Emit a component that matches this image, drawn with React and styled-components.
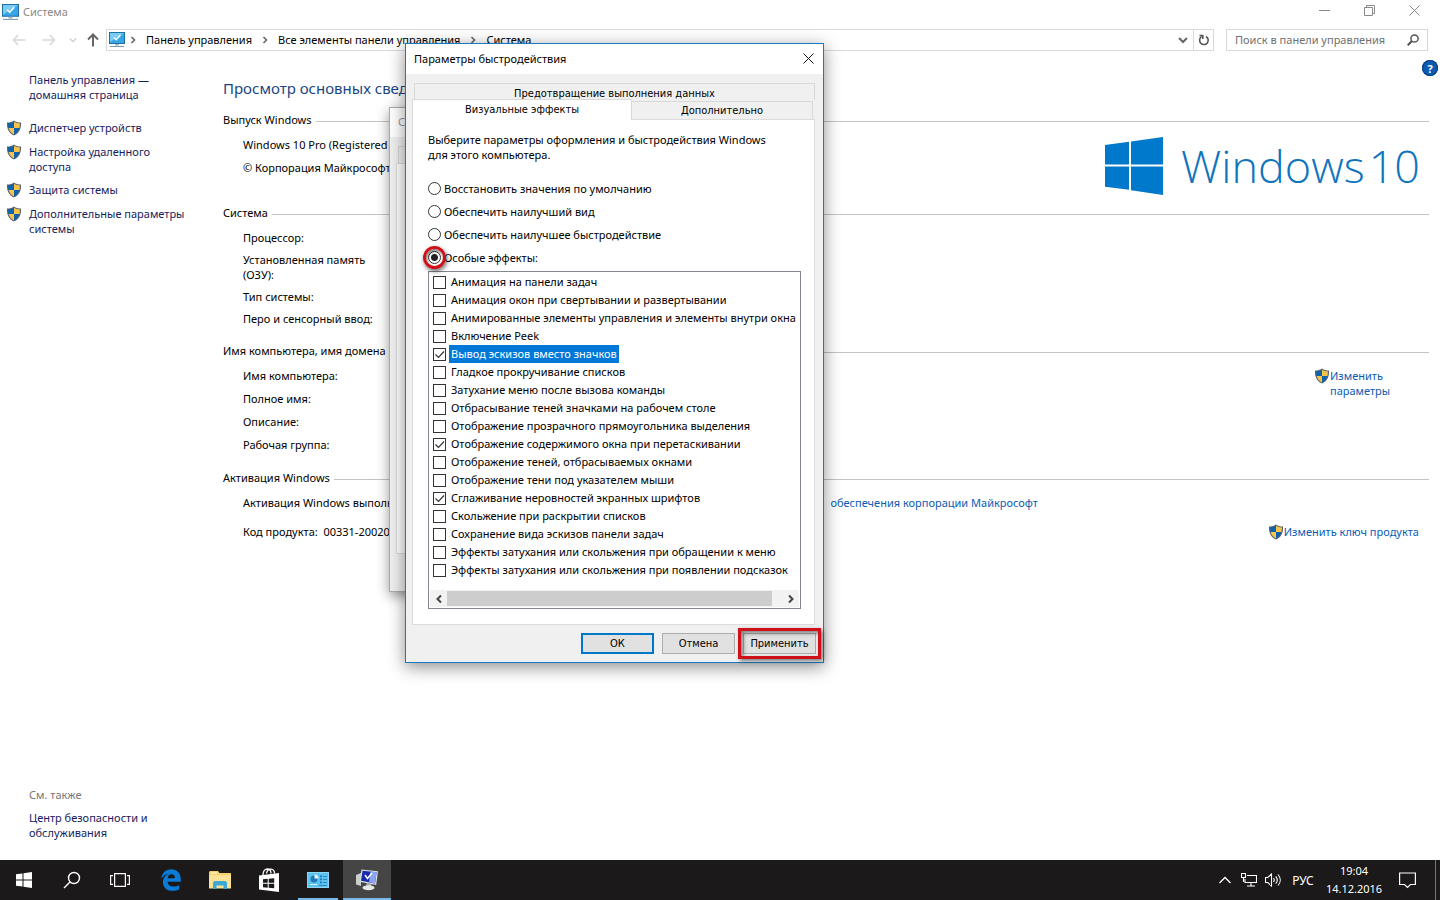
import React, { useState } from 'react';
import styled, { createGlobalStyle } from 'styled-components';

const sideLinks = [
    'Диспетчер устройств',
    'Настройка удаленного доступа',
    'Защита системы',
    'Дополнительные параметры системы',
];

const modes = [
    'Восстановить значения по умолчанию',
    'Обеспечить наилучший вид',
    'Обеспечить наилучшее быстродействие',
    'Особые эффекты:',
];

const effects = [
    'Анимация на панели задач',
    'Анимация окон при свертывании и развертывании',
    'Анимированные элементы управления и элементы внутри окна',
    'Включение Peek',
    'Вывод эскизов вместо значков',
    'Гладкое прокручивание списков',
    'Затухание меню после вызова команды',
    'Отбрасывание теней значками на рабочем столе',
    'Отображение прозрачного прямоугольника выделения',
    'Отображение содержимого окна при перетаскивании',
    'Отображение теней, отбрасываемых окнами',
    'Отображение тени под указателем мыши',
    'Сглаживание неровностей экранных шрифтов',
    'Скольжение при раскрытии списков',
    'Сохранение вида эскизов панели задач',
    'Эффекты затухания или скольжения при обращении к меню',
    'Эффекты затухания или скольжения при появлении подсказок',
];

const MonitorIcon = ({ size }) => (
    <svg width={size} height={size} viewBox='0 0 16 16'>
        <rect x='0.5' y='0.5' width='15' height='11' fill='#35a7e8' stroke='#1f6f9f' />
        <path d='M1 1h14L1 10z' fill='#7accf5' />
        <path d='M5 5.5l2.2 2.3L11.5 3' fill='none' stroke='#fff' strokeWidth='1.4' />
        <path d='M6 12h4v1.5H6z' fill='#9bb4c4' />
        <path d='M1 14.5h14' stroke='#7d98a8' />
    </svg>
);

const ShieldIcon = () => (
    <svg width='16' height='16' viewBox='0 0 16 16'>
        <path d='M8 .5C6 2 3.5 2.6 1 2.5c-.3 6 1.400 10.500 7 13 5.600-2.500 7.300-7 7-13C12.500 2.600 10 2 8 .5z' fill='#59606a' />
        <path d='M8 1.800C6.200 3 4.200 3.500 2.100 3.500c0 1.700.1 3.100.5 4.500H8z' fill='#0f62ac' />
        <path d='M8 1.800c1.800 1.200 3.800 1.700 5.900 1.700 0 1.700-.1 3.100-.5 4.500H8z' fill='#f6c34c' />
        <path d='M2.600 8c.8 2.800 2.400 5 5.400 6.400V8z' fill='#f6c34c' />
        <path d='M13.400 8c-.8 2.800-2.400 5-5.400 6.400V8z' fill='#0f62ac' />
    </svg>
);

const Arrow = ({ dir, color }) => (
    <svg width='14' height='14' viewBox='0 0 14 14' fill='none' stroke={color} strokeWidth='1.6'>
        {dir === 'left' && <path d='M13.500 7H1.500M6 2L1.500 7 6 12' />}
        {dir === 'right' && <path d='M.5 7h12M8 2l4.500 5L8 12' />}
        {dir === 'up' && <path d='M7 13.500V1.500M2 6.500l5-5 5 5' strokeWidth='2' />}
    </svg>
);

const Chevron = ({ dir, color = '#666', width = 1.6, size = 10 }) => (
    <svg width={size} height={size} viewBox='0 0 10 10' fill='none' stroke={color} strokeWidth={width}>
        {dir === 'left' && <path d='M7 1.500L3.500 5 7 8.500' />}
        {dir === 'right' && <path d='M3.500 2L6.500 5 3.500 8' />}
        {dir === 'next' && <path d='M3 1.500L6.500 5 3 8.500' />}
        {dir === 'down' && <path d='M1 3l4 4 4-4' />}
    </svg>
);

const CloseIcon = ({ color }) => (
    <svg width='11' height='11' viewBox='0 0 11 11' stroke={color}>
        <path d='M.5.5l10 10M10.500.5l-10 10' />
    </svg>
);

const Option = ({ index, label, checked, onChange }) => (
    <OptionLabel htmlFor={`mode${index}`} >
        <Radio id={`mode${index}`} type='radio' name='mode' checked={checked} onChange={onChange} />
        {label}
        {index === 3 && <RedRing />}
    </OptionLabel>
);

const Effect = ({ index, label, checked, selected, onChange }) => (
    <EffectRow htmlFor={`effect${index}`} >
        <CheckCell>
            <Check id={`effect${index}`} type='checkbox' checked={checked} onChange={onChange} />
            {checked && (
                <Tick viewBox='0 0 13 13'>
                    <path d='M2.500 6.500l3 3 5.500-6' />
                </Tick>
            )}
        </CheckCell>
        <EffectText $selected={selected} > {label} </EffectText>
    </EffectRow>
);

const PerformanceDialog = () => {
    const [mode, setMode] = useState(3);
    const [checked, setChecked] = useState([4, 9, 12]);
    const [selected, setSelected] = useState(4);

    const toggle = (index) => {
        setSelected(index);
        setChecked(checked.includes(index) ? checked.filter(i => i !== index) : [...checked, index]);
    };

    return (
        <Dialog>
            <DialogTitle>
                Параметры быстродействия
                <IconButton aria-label='Закрыть' ><CloseIcon color='#111' /></IconButton>
            </DialogTitle>
            <DialogBody>
                <BackTab> Предотвращение выполнения данных </BackTab>
                <Tabs>
                    <ActiveTab> Визуальные эффекты </ActiveTab>
                    <Tab> Дополнительно </Tab>
                </Tabs>
                <Panel>
                    <Intro> Выберите параметры оформления и быстродействия Windows для этого компьютера. </Intro>
                    <Options>
                        {modes.map((label, i) => (
                            <Option key={label} index={i} label={label} checked={mode === i} onChange={() => setMode(i)} />
                        ))}
                    </Options>
                    <ListBox>
                        <List>
                            {effects.map((label, i) => (
                                <Effect
                                    key={label}
                                    index={i}
                                    label={label}
                                    checked={checked.includes(i)}
                                    selected={selected === i}
                                    onChange={() => toggle(i)}
                                />
                            ))}
                        </List>
                        <ScrollBar>
                            <IconButton aria-label='Влево' ><Chevron dir='left' color='#444' width={2} /></IconButton>
                            <ScrollTrack><ScrollThumb /></ScrollTrack>
                            <IconButton aria-label='Вправо' ><Chevron dir='next' color='#444' width={2} /></IconButton>
                        </ScrollBar>
                    </ListBox>
                </Panel>
                <Buttons>
                    <PrimaryButton> ОК </PrimaryButton>
                    <PushButton> Отмена </PushButton>
                    <ApplyWrap>
                        <PushButton> Применить </PushButton>
                        <RedFrame />
                    </ApplyWrap>
                </Buttons>
            </DialogBody>
        </Dialog>
    );
};

const Taskbar = () => (
    <Bar>
        <TaskGroup>
            <TaskButton aria-label='Пуск' >
                <svg width='16' height='16' viewBox='0 0 16 16' fill='#fff'>
                    <path d='M0 2.300L6.500 1.400v6.100H0zM7.500 1.200L16 0v7.500H7.500zM0 8.500h6.500v6.100L0 13.700zM7.500 8.500H16V16l-8.500-1.200z' />
                </svg>
            </TaskButton>
            <TaskButton aria-label='Поиск' >
                <svg width='18' height='18' viewBox='0 0 18 18' fill='none' stroke='#fff' strokeWidth='1.4'>
                    <circle cx='11' cy='7' r='5.500' /><path d='M7 11L1 17' />
                </svg>
            </TaskButton>
            <TaskButton aria-label='Представление задач' >
                <svg width='20' height='14' viewBox='0 0 20 14' fill='none' stroke='#fff' strokeWidth='1.200'>
                    <path d='M4.600.6h10.800v12.800H4.600zM3 2.600H.6v8.800H3M17 2.600h2.400v8.800H17' />
                </svg>
            </TaskButton>
        </TaskGroup>
        <AppGroup>
            <TaskButton aria-label='Edge' >
                <svg width='20' height='22' viewBox='0 0 20 22'>
                    <path d='M.2 9.700C1 4 4.700.3 10.300.3c6 0 9.700 4.500 9.500 10.700v1.800H6.600c.2 3.200 2.600 4.800 5.800 4.800 2.200 0 4.100-.7 5.900-1.700v4.300c-2 1.100-4.300 1.600-6.900 1.600C5.500 21.800 1.900 18.300 1.900 13c0-3.600 1.900-6.700 5.300-8.300C4.200 5.200 1.800 7 .2 9.700zm6.500-.5h7.200c.1-2.500-1.100-4-3.500-4-2.100 0-3.400 1.500-3.700 4z' fill='#0a7bd6' fillRule='evenodd' />
                </svg>
            </TaskButton>
            <TaskButton aria-label='Проводник' >
                <svg width='22' height='18' viewBox='0 0 22 18'>
                    <path d='M1 0h8l1.500 2H22v15H0V1z' fill='#f5cf6b' />
                    <path d='M2 1.500h6V3H2z' fill='#fff2bf' />
                    <path d='M0 4h22v13.500H0z' fill='#fbe296' />
                    <path d='M4 11.500L5.500 10h11l1.500 1.500V18h-3.500v-3.500h-7V18H4z' fill='#3fa9d6' />
                </svg>
            </TaskButton>
            <TaskButton aria-label='Магазин' >
                <svg width='22' height='24' viewBox='0 0 22 24'>
                    <path d='M1 7.500L21 5v19L1 21.500z' fill='#fff' />
                    <path d='M5 7C5 3 7 1 9.500 1S13 3 13 5.500M8.500 5.500C9 2.500 11 1 13 1.200c2.300.2 3.500 2 3.500 4.300' fill='none' stroke='#fff' strokeWidth='1.300' />
                    <path d='M5 11.200l4.700-.4v4H5zM10.700 10.700l5.500-.5v4.600h-5.500zM5 15.700h4.700v4L5 19.300zM10.700 15.700h5.500v4.600l-5.500-.5z' fill='#1b1919' />
                </svg>
            </TaskButton>
            <TaskButton aria-label='Панель управления' $line='40px' >
                <svg width='22' height='16' viewBox='0 0 22 16'>
                    <rect x='.5' y='.5' width='21' height='15' fill='#5cc3f0' stroke='#8fd6f6' />
                    <circle cx='7' cy='7' r='3.500' fill='#2277bb' />
                    <path d='M7.500 6.500V2.500a4 4 0 0 1 4 4z' fill='#e8f7fd' />
                    <path d='M13 3.500h1.800v1.800H13zM13 6.500h1.800v1.800H13zM13 9.500h1.800v1.800H13z' fill='#1673b5' />
                    <path d='M16 4.500h4M16 7.500h4M16 10.500h4M12 13.500h8' stroke='#2a86c4' />
                    <path d='M3 12.500h7' stroke='#d8f2fd' />
                </svg>
            </TaskButton>
            <TaskButton aria-label='Свойства системы' $line='48px' $active >
                <svg width='24' height='22' viewBox='0 0 24 22'>
                    <path d='M1 6l5-2v13l-5-1.500z' fill='#c9cec9' />
                    <path d='M6.500.5L23 2.200 21.200 16 4.500 12.800z' fill='#d9dee2' />
                    <path d='M7.600 1.800l14 1.500-1.600 11.200L6 11.800z' fill='#1a2aa8' />
                    <path d='M15.500 2.600l6.100.7L20 14.500l-6-1.200z' fill='#8ca4f2' />
                    <path d='M10 6l2.500 3.500L17 4' fill='none' stroke='#fff' strokeWidth='1.500' />
                    <path d='M11.500 14l5 1-.4 2.400h-4.800z' fill='#aab1b6' />
                    <ellipse cx='13.500' cy='18.800' rx='6' ry='2.500' fill='#e6e8e6' />
                </svg>
            </TaskButton>
        </AppGroup>
        <Tray>
            <TrayButton aria-label='Скрытые значки' >
                <svg width='12' height='8' viewBox='0 0 12 8' fill='none' stroke='#fff' strokeWidth='1.300'><path d='M.5 7L6 1.500 11.500 7' /></svg>
            </TrayButton>
            <TrayButton aria-label='Сеть' >
                <svg width='16' height='14' viewBox='0 0 16 14' fill='none' stroke='#fff' strokeWidth='1.100'>
                    <path d='M6 2.500h9.500v7H4V6M10 9.500v3M6 13h8M.5.5h4v4h-4zM2.500 4.500V9' />
                </svg>
            </TrayButton>
            <TrayButton aria-label='Громкость' >
                <svg width='17' height='14' viewBox='0 0 17 14' fill='none' stroke='#fff' strokeWidth='1.100'>
                    <path d='M.5 4.500h2.300L6.500 1v12L2.800 9.500H.5zM8.500 5c1 1.300 1 2.700 0 4M10.700 3.300c2 2.300 2 5.100 0 7.400M13 1.500c3 3.300 3 7.700 0 11' />
                </svg>
            </TrayButton>
            <Lang> РУС </Lang>
            <Clock>
                <time>19:04</time>
                <time>14.12.2016</time>
            </Clock>
            <Notify aria-label='Центр уведомлений' >
                <svg width='17' height='17' viewBox='0 0 17 17' fill='none' stroke='#fff' strokeWidth='1.200'>
                    <path d='M.6 1h15.800v11.500h-5L8.500 15.500l-3-3H.6z' />
                </svg>
            </Notify>
            <ShowDesktop aria-label='Свернуть все окна' />
        </Tray>
    </Bar>
);

const App = () => (
    <Screen>
        <GlobalStyle />
        <TitleBar>
            <MonitorIcon size={17} />
            <Title> Система </Title>
            <WindowButton aria-label='Свернуть' >
                <svg width='11' height='11' stroke='#888'><path d='M0 5.500h11' /></svg>
            </WindowButton>
            <WindowButton aria-label='Развернуть' >
                <svg width='11' height='11' fill='none' stroke='#888'><path d='M.5 2.500h8v8h-8zM2.500 2.500v-2h8v8h-2' /></svg>
            </WindowButton>
            <WindowButton aria-label='Закрыть' ><CloseIcon color='#888' /></WindowButton>
        </TitleBar>
        <NavBar>
            <NavButtons>
                <IconButton aria-label='Назад' ><Arrow dir='left' color='#d8d8d8' /></IconButton>
                <IconButton aria-label='Вперед' ><Arrow dir='right' color='#d8d8d8' /></IconButton>
                <NarrowButton aria-label='Журнал' ><Chevron dir='down' color='#ccc' size={8} /></NarrowButton>
                <NarrowButton aria-label='Вверх' ><Arrow dir='up' color='#666' /></NarrowButton>
            </NavButtons>
            <Address>
                <MonitorIcon size={16} />
                <Chevron dir='right' />
                <Crumb href='#panel' > Панель управления </Crumb>
                <Chevron dir='right' />
                <Crumb href='#all' > Все элементы панели управления </Crumb>
                <Chevron dir='right' />
                <Crumb href='#system' > Система </Crumb>
                <DropButton aria-label='Предыдущие расположения' ><Chevron dir='down' width={2} /></DropButton>
                <RefreshButton aria-label='Обновить' >
                    <svg width='12' height='12' viewBox='0 0 12 12' fill='none' stroke='#555' strokeWidth='1.600'>
                        <path d='M8 2.500a4.300 4.300 0 1 1-4.500.2M1.500 1.500h3.300V5' />
                    </svg>
                </RefreshButton>
            </Address>
            <Search>
                <SearchInput type='search' aria-label='Поиск' placeholder='Поиск в панели управления' />
                <svg width='12' height='12' viewBox='0 0 12 12' fill='none' stroke='#555' strokeWidth='1.500'>
                    <circle cx='7.500' cy='4.500' r='3.600' /><path d='M5 7L.7 11.300' strokeWidth='2' />
                </svg>
            </Search>
        </NavBar>
        <Content>
            <Sidebar>
                <SideLink href='#home' $first > Панель управления — домашняя страница </SideLink>
                {sideLinks.map(label => (
                    <SideLink key={label} href='#side' ><ShieldIcon /><span>{label}</span></SideLink>
                ))}
                <SeeAlso> См. также </SeeAlso>
                <SideLink href='#security' > Центр безопасности и обслуживания </SideLink>
            </Sidebar>
            <Main>
                <Heading> Просмотр основных сведений </Heading>
                <Section $height={93} >
                    <Legend> Выпуск Windows </Legend>
                    <Rows>
                        <p>Windows 10 Pro (Registered</p>
                        <p>© Корпорация Майкрософт</p>
                    </Rows>
                    <Brand>
                        <svg width='58' height='58' viewBox='0 0 58 58' fill='#0078cc'>
                            <path d='M0 8l24-3.300V27.500H0zM26 4.400L58 0v27.500H26zM0 29.500h24v23.200L0 49.700zM26 29.500h32V58l-32-4.700z' />
                        </svg>
                        <BrandText><span>Windows</span><span>10</span></BrandText>
                    </Brand>
                </Section>
                <Section $height={138} >
                    <Legend> Система </Legend>
                    <Rows $tight >
                        <p>Процессор:</p>
                        <p>Установленная память (ОЗУ):</p>
                        <p>Тип системы:</p>
                        <p>Перо и сенсорный ввод:</p>
                    </Rows>
                </Section>
                <Section $height={127} >
                    <Legend> Имя компьютера, имя домена </Legend>
                    <Rows>
                        <p>Имя компьютера:</p>
                        <p>Полное имя:</p>
                        <p>Описание:</p>
                        <p>Рабочая группа:</p>
                    </Rows>
                    <ChangeLink href='#change' ><ShieldIcon /><span>Изменить параметры</span></ChangeLink>
                </Section>
                <Section $height={80} >
                    <Legend> Активация Windows </Legend>
                    <Activation>
                        <p>Активация Windows выполнена</p>
                        <BlueLink href='#license' > обеспечения корпорации Майкрософт </BlueLink>
                    </Activation>
                    <Product>
                        <p>Код продукта:&nbsp; 00331-20020</p>
                        <BlueLink href='#key' ><ShieldIcon /> Изменить ключ продукта </BlueLink>
                    </Product>
                </Section>
            </Main>
            <HelpButton aria-label='Справка' >?</HelpButton>
        </Content>
        <Taskbar />
        <BackDialog>
            <BackTitle> С </BackTitle>
            <BackBody>
                <BackDialogTab />
                <BackPanel />
            </BackBody>
        </BackDialog>
        <PerformanceDialog />
    </Screen>
);

const GlobalStyle = createGlobalStyle`
    * { box-sizing: border-box; }
    body { margin: 0; overflow: hidden; }
    body, button, input {
        font-family: 'Noto Sans', 'Open Sans', sans-serif;
        font-size: 11px;
        line-height: 15px;
    }
    p { margin: 0; }
    a { text-decoration: none; }
    button { border: 0; padding: 0; background: none; color: inherit; }
    svg { flex: none; display: block; }
`;

const Screen = styled.div`
    position: relative;
    display: flex;
    flex-direction: column;
    min-height: 100vh;
    background: #fff;
    color: #000;
    overflow: hidden;
`;

const TitleBar = styled.header`
    display: flex;
    align-items: center;
    height: 24px;
    padding-left: 2px;
`;

const Title = styled.div`
    flex: 1;
    padding: 0 0 2px 4px;
    color: #8a8a8a;
`;

const WindowButton = styled.button`
    display: grid;
    place-items: center;
    width: 45px;
    height: 20px;
    align-self: flex-start;
    &:last-child { margin-right: 3px; }
`;

const NavBar = styled.nav`
    display: flex;
    align-items: center;
    gap: 12px;
    height: 32px;
    padding-right: 12px;
`;

const NavButtons = styled.div`
    display: flex;
    align-items: center;
    width: 94px;
    padding-left: 4px;
`;

const IconButton = styled.button`
    display: grid;
    place-items: center;
    flex: none;
    width: 30px;
`;

const NarrowButton = styled(IconButton)`
    width: 17px;
    &:last-child { margin-left: 3px; }
`;

const Address = styled.div`
    display: flex;
    align-items: center;
    flex: 1;
    height: 22px;
    padding-left: 2px;
    gap: 8px;
    border: 1px solid #d9d9d9;
    svg + svg { margin-left: -5px; }
`;

const Crumb = styled.a`
    padding-bottom: 2px;
    color: #000;
    white-space: nowrap;
`;

const DropButton = styled(IconButton)`
    width: 20px;
    margin-left: auto;
`;

const RefreshButton = styled(IconButton)`
    width: 20px;
    height: 20px;
    margin-left: -8px;
    border-left: 1px solid #d9d9d9;
`;

const Search = styled.label`
    display: flex;
    align-items: center;
    width: 202px;
    height: 22px;
    padding: 0 8px;
    border: 1px solid #d9d9d9;
`;

const SearchInput = styled.input`
    flex: 1;
    min-width: 0;
    padding: 0 0 2px;
    border: 0;
    outline: 0;
    background: none;
    &::placeholder { color: #707070; }
`;

const Content = styled.div`
    display: flex;
    flex: 1;
    padding-right: 2px;
`;

const Sidebar = styled.aside`
    display: flex;
    flex-direction: column;
    gap: 8px;
    width: 223px;
    padding: 16px 28px 20px 29px;
`;

const SideLink = styled.a`
    display: flex;
    width: ${props => props.$first ? '140px' : '166px'};
    margin-bottom: ${props => props.$first ? '10px' : '0'};
    color: #151c60;
    svg { margin-left: -23px; margin-right: 7px; }
`;

const SeeAlso = styled.div`
    margin-top: auto;
    color: #777;
`;

const Main = styled.main`
    flex: 1;
    padding-top: 22px;
`;

const Heading = styled.h1`
    margin: 0 0 14px;
    font-size: 15px;
    line-height: 20px;
    font-weight: 400;
    color: #1a4584;
    white-space: nowrap;
`;

const Section = styled.section`
    position: relative;
    height: ${props => props.$height}px;
`;

const Legend = styled.h2`
    display: flex;
    align-items: center;
    gap: 4px;
    margin: 0 0 10px;
    font-size: 11px;
    line-height: 15px;
    font-weight: 400;
    white-space: nowrap;
    &::after {
        content: '';
        flex: 1;
        height: 1px;
        margin-top: 3px;
        background: #c4c4c4;
    }
`;

const Rows = styled.div`
    display: flex;
    flex-direction: column;
    gap: ${props => props.$tight ? '7px' : '8px'};
    width: ${props => props.$tight ? '165px' : '320px'};
    padding-left: 20px;
`;

const Brand = styled.div`
    position: absolute;
    top: 25px;
    right: 9px;
    display: flex;
    align-items: center;
    gap: 18px;
`;

const BrandText = styled.div`
    display: flex;
    gap: 4px;
    font-family: 'Open Sans', sans-serif;
    font-size: 45px;
    line-height: 58px;
    font-weight: 300;
    color: #0f74bd;
`;

const BlueLink = styled.a`
    display: flex;
    color: #0a5cb4;
    white-space: nowrap;
`;

const ChangeLink = styled.a`
    position: absolute;
    top: 25px;
    right: 23px;
    display: flex;
    width: 92px;
    color: #0a5cb4;
`;

const Activation = styled.div`
    display: flex;
    justify-content: space-between;
    width: 815px;
    padding-left: 20px;
`;

const Product = styled.div`
    display: flex;
    justify-content: space-between;
    margin-top: 14px;
    padding: 0 10px 0 20px;
`;

const HelpButton = styled.button`
    width: 16px;
    height: 16px;
    margin: 4px 0 0 -7px;
    border-radius: 50%;
    background: #0b5cb0;
    box-shadow: inset 0 0 0 1px #083f80;
    color: #fff;
    font-weight: 700;
`;

const BackDialog = styled.section`
    position: absolute;
    left: 389px;
    top: 107px;
    display: flex;
    flex-direction: column;
    width: 420px;
    height: 485px;
    border: 1px solid #aaa;
    background: #f0f0f0;
    box-shadow: 0 4px 12px rgba(0, 0, 0, .4);
`;

const BackTitle = styled.div`
    height: 29px;
    padding: 6px 8px;
    background: #fff;
    color: #999;
`;

const BackBody = styled.div`
    display: flex;
    flex-direction: column;
    flex: 1;
    padding: 9px 6px 37px;
`;

const BackDialogTab = styled.div`
    width: 100px;
    height: 17px;
    margin-left: 2px;
    border: 1px solid #d9d9d9;
    border-bottom: 0;
`;

const BackPanel = styled.div`
    flex: 1;
    border: 1px solid #dcdcdc;
    background: #fff;
`;

const Dialog = styled.section`
    position: absolute;
    left: 405px;
    top: 43px;
    width: 419px;
    border: 1px solid #1979bd;
    background: #f0f0f0;
    box-shadow: 0 4px 16px rgba(0, 0, 0, .45);
`;

const DialogTitle = styled.div`
    display: flex;
    align-items: center;
    justify-content: space-between;
    height: 30px;
    padding: 0 0 2px 8px;
    background: #fff;
`;

const DialogBody = styled.div`
    padding: 9px 6px 8px;
    button {
        font-family: 'DejaVu Sans Condensed', 'DejaVu Sans', sans-serif;
        font-size: 11px;
    }
`;

const BackTab = styled.button`
    display: block;
    width: 401px;
    height: 17px;
    margin-left: 2px;
    padding-top: 2px;
    border: 1px solid #d9d9d9;
    border-bottom: 0;
`;

const Tabs = styled.div`
    position: relative;
    display: flex;
    align-items: flex-end;
    height: 20px;
    margin-top: -1px;
`;

const Tab = styled.button`
    width: 181px;
    height: 18px;
    border: 1px solid #d9d9d9;
    border-width: 1px 1px 0 0;
    background: #f0f0f0;
`;

const ActiveTab = styled(Tab)`
    width: 220px;
    height: 21px;
    margin-bottom: -1px;
    padding-bottom: 2px;
    border-width: 1px 1px 0 1px;
    background: #fff;
`;

const Panel = styled.div`
    width: 403px;
    padding: 12px 13px 15px 15px;
    border: 1px solid #dcdcdc;
    background: #fff;
`;

const Intro = styled.p`
    width: 360px;
`;

const Options = styled.div`
    display: flex;
    flex-direction: column;
    gap: 8px;
    margin: 19px 0 6px;
`;

const OptionLabel = styled.label`
    position: relative;
    display: flex;
    align-items: center;
    gap: 3px;
`;

const Radio = styled.input`
    appearance: none;
    width: 13px;
    height: 13px;
    margin: 0;
    border: 1px solid #333;
    border-radius: 50%;
    background: #fff;
    &:checked {
        background: radial-gradient(circle, #222 0 3px, #fff 4px);
    }
`;

const RedRing = styled.span`
    position: absolute;
    left: -5px;
    top: -4px;
    width: 23px;
    height: 23px;
    border: 3px solid #d01018;
    border-radius: 50%;
    box-shadow: 1px 2px 4px rgba(0, 0, 0, .6), inset 1px 2px 3px rgba(0, 0, 0, .5);
`;

const ListBox = styled.div`
    border: 1px solid #828790;
    padding: 1px;
`;

const List = styled.div`
    height: 317px;
    overflow: hidden;
`;

const EffectRow = styled.label`
    display: flex;
    align-items: center;
    gap: 3px;
    height: 18px;
    padding-left: 3px;
`;

const CheckCell = styled.span`
    display: grid;
    flex: none;
`;

const Check = styled.input`
    grid-area: 1 / 1;
    appearance: none;
    width: 13px;
    height: 13px;
    margin: 0;
    border: 1px solid #333;
    background: #fff;
`;

const Tick = styled.svg`
    grid-area: 1 / 1;
    width: 13px;
    height: 13px;
    fill: none;
    stroke: #333;
    stroke-width: 1.2;
    pointer-events: none;
`;

const EffectText = styled.span`
    padding: 0 2px;
    line-height: 18px;
    white-space: nowrap;
    background: ${props => props.$selected ? '#0078d7' : 'transparent'};
    color: ${props => props.$selected ? '#fff' : 'inherit'};
`;

const ScrollBar = styled.div`
    display: flex;
    height: 17px;
    background: #f2f2f2;
    ${IconButton} { width: 17px; }
`;

const ScrollTrack = styled.div`
    flex: 1;
    padding: 1px 0;
`;

const ScrollThumb = styled.div`
    width: 97%;
    height: 15px;
    background: #cdcdcd;
`;

const Buttons = styled.div`
    display: flex;
    justify-content: flex-end;
    gap: 8px;
    margin-top: 8px;
    padding-right: 1px;
`;

const PushButton = styled.button`
    width: 73px;
    height: 21px;
    border: 1px solid #adadad;
    background: #e1e1e1;
`;

const PrimaryButton = styled(PushButton)`
    border: 2px solid #0078c8;
`;

const ApplyWrap = styled.div`
    position: relative;
`;

const RedFrame = styled.span`
    position: absolute;
    inset: -5px;
    border: 3px solid #d01018;
    box-shadow: 2px 2px 4px rgba(0, 0, 0, .5), inset 2px 2px 4px rgba(0, 0, 0, .5);
    pointer-events: none;
`;

const Bar = styled.footer`
    display: flex;
    height: 40px;
    background: #1b1919;
    color: #fff;
`;

const TaskGroup = styled.div`
    display: flex;
`;

const AppGroup = styled(TaskGroup)`
    gap: 1px;
    margin-left: 3px;
`;

const TaskButton = styled.button`
    display: grid;
    place-items: center;
    width: 48px;
    height: 40px;
    background-color: ${props => props.$active ? '#464545' : 'transparent'};
    background-image: linear-gradient(#76b9ed, #76b9ed);
    background-repeat: no-repeat;
    background-position: center bottom;
    background-size: ${props => props.$line || '0'} 2px;
`;

const Tray = styled.div`
    display: flex;
    align-items: center;
    margin-left: auto;
`;

const TrayButton = styled.button`
    display: grid;
    place-items: center;
    width: 24px;
    height: 40px;
`;

const Lang = styled.button`
    width: 36px;
    height: 40px;
    font-size: 12px;
`;

const Clock = styled.div`
    display: flex;
    flex-direction: column;
    width: 66px;
    gap: 3px;
    padding-bottom: 2px;
    text-align: center;
`;

const Notify = styled(TrayButton)`
    width: 40px;
`;

const ShowDesktop = styled.button`
    width: 5px;
    height: 40px;
    margin-left: 8px;
    border-left: 1px solid #777;
`;

export default App;
